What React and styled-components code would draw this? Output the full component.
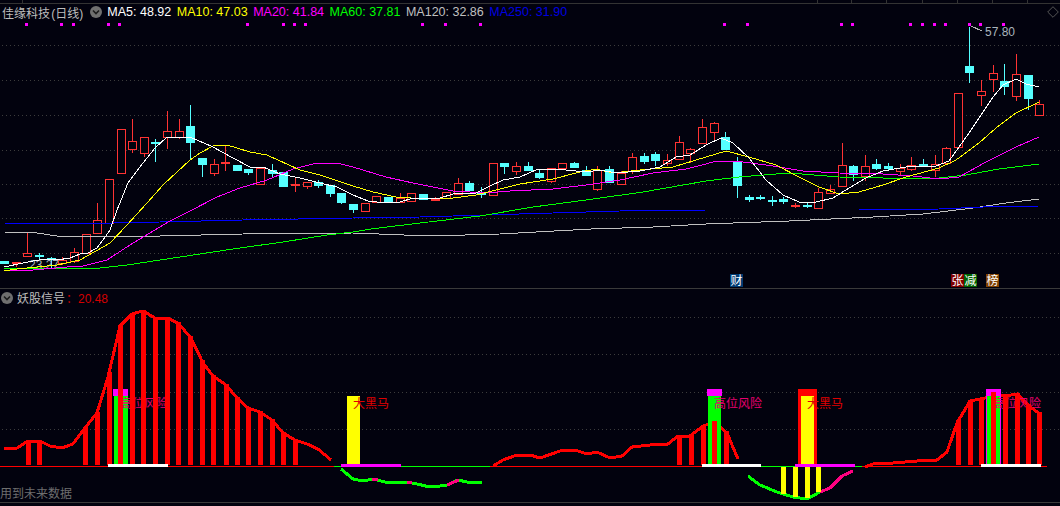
import React from "react";
import styled, { createGlobalStyle } from "styled-components";

const BG = "#02020e";
const CJK = `"Liberation Sans", "Noto Sans CJK SC", sans-serif`;

const GlobalStyle = createGlobalStyle`
  html, body {
    margin: 0;
    padding: 0;
    background: ${BG};
  }
`;

const Page = styled.div`
  width: 1060px;
  height: 506px;
  overflow: hidden;
  display: flex;
  flex-direction: column;
  background: ${BG};
  font-family: ${CJK};
`;

const Ruler = styled.svg`
  display: block;
  flex: none;
  width: 1060px;
  height: 4px;
`;

const Panel = styled.section`
  position: relative;
  flex: none;
`;

const Legend = styled.div`
  display: flex;
  align-items: center;
  height: ${(p) => p.$height}px;
  padding-left: ${(p) => p.$pad}px;
  white-space: nowrap;
`;

const Title = styled.span`
  color: #bdbdbd;
  font-size: 12px;
  word-spacing: -2px;
`;

const MaValue = styled.span`
  color: ${(p) => p.$color};
  font-size: 12.5px;
  margin-right: 5.5px;
`;

const SignalValue = styled.span`
  color: #d40000;
  font-size: 12px;
  margin-left: 1px;
`;

const CollapseBadge = styled.svg`
  flex: none;
  width: 12px;
  height: 12px;
  margin: ${(p) => p.$margin};
`;

const Diamond = styled.svg`
  flex: none;
  width: 12px;
  height: 12px;
  margin-left: auto;
  margin-right: 1px;
`;

const Chart = styled.svg`
  display: block;
  width: 1060px;
  height: ${(p) => p.$height}px;
`;

const Divider = styled.div`
  flex: none;
  height: 1px;
  background: #3a3a3a;
`;

const FutureNote = styled.div`
  position: absolute;
  left: 0;
  bottom: 1px;
  color: #6e6e6e;
  font-size: 12px;
  line-height: 14px;
`;

const GridLine = styled.line`
  stroke: #3c3c3c;
  stroke-width: 1;
  stroke-dasharray: 1 3;
`;

const Crisp = styled.polyline`
  fill: none;
  stroke: ${(p) => p.$color};
  stroke-width: ${(p) => p.$w || 1};
  shape-rendering: crispEdges;
`;

const PriceLabel = styled.text`
  fill: #a9b4bd;
  font-size: 12px;
  font-family: "Liberation Sans", sans-serif;
`;

const SignalLabel = styled.text`
  fill: ${(p) => p.$color};
  font-size: 12px;
  font-family: ${CJK};
`;

const BadgeText = styled.text`
  fill: #fff;
  font-size: 12px;
  font-family: ${CJK};
  text-anchor: middle;
`;

const pts = (arr) => arr.map((p) => p.join(",")).join(" ");

const candleX = (i) => 4.2 + 11.63 * i;

// body top, body bottom, high, low, kind: r hollow red, R solid red, c solid cyan
const CANDLES = [
  [261, 264, 261, 264, "c"], [262, 264, 262, 267, "R"], [252.5, 255.5, 233, 256, "r"], [255, 257, 252.5, 259, "c"],
  [258, 260, 256.5, 268, "c"], [260, 263, 256.5, 265, "r"], [252, 261, 248, 263, "r"], [234, 253, 234, 253, "r"],
  [220, 233, 203, 233, "r"], [179, 223, 179, 223, "r"], [129, 173, 129, 173, "r"], [141, 149, 119, 153, "r"],
  [137, 153, 137, 157, "r"], [142, 144, 139, 162, "c"], [131, 137, 111, 149, "r"], [131, 137, 119, 139, "r"],
  [126, 143, 105, 159, "c"], [158, 165, 158, 177, "c"], [164, 173, 159, 176, "r"], [162, 164, 145, 171, "R"],
  [165, 171, 165, 171, "c"], [169, 173, 169, 175, "c"], [168, 184, 168, 184, "r"], [170, 174, 164, 177, "c"],
  [172, 187, 172, 187, "c"], [184, 185, 178, 192, "R"], [182, 186, 182, 189, "r"], [182, 186, 180, 188, "c"],
  [185, 194, 185, 197, "c"], [193, 203, 193, 204, "c"], [204, 210, 204, 213, "c"], [203, 211, 203, 211, "r"],
  [196, 202, 196, 203, "r"], [197, 202, 197, 203, "c"], [198, 202, 193, 203, "r"], [193, 201, 193, 201, "r"],
  [194, 200, 194, 200, "c"], [198, 201, 197, 201, "R"], [192, 198, 192, 198, "r"], [183, 194, 178, 194, "r"],
  [183, 191, 181, 191, "c"], [193, 195, 187, 198, "c"], [163, 195, 163, 195, "r"], [163, 167, 163, 174, "c"],
  [166, 171, 162, 175, "r"], [166, 171, 162, 171, "c"], [173, 178, 170, 179, "c"], [168, 181, 168, 183, "r"],
  [163, 168, 163, 168, "r"], [163, 168, 162, 168, "c"], [170, 176, 166, 176, "c"], [170, 189, 166, 191, "r"],
  [169, 183, 166, 183, "c"], [173, 184, 171, 184, "r"], [157, 171, 153, 174, "r"], [156, 162, 153, 164, "c"],
  [154, 161, 152, 166, "c"], [160, 163, 154, 166, "r"], [142, 159, 136, 159, "r"], [149, 153, 148, 163, "r"],
  [127, 143, 119, 143, "r"], [123, 132, 122, 140, "r"], [137, 150, 132, 150, "c"], [162, 186, 157, 198, "c"],
  [197, 200, 195, 202, "c"], [197, 199, 195, 200, "c"], [200, 202, 196, 206, "c"], [199, 202, 197, 204, "c"],
  [205, 207, 203, 208, "R"], [205, 207, 202, 208, "c"], [192, 208, 188, 209, "r"], [189, 193, 185, 193, "r"],
  [165, 186, 143, 186, "r"], [166, 175, 165, 181, "c"], [166, 176, 155, 181, "r"], [164, 169, 159, 170, "c"],
  [166, 169, 163, 171, "c"], [168, 171, 164, 176, "r"], [165, 169, 157, 171, "r"], [164, 166, 159, 167, "c"],
  [164, 170, 155, 177, "r"], [148, 163, 147, 163, "r"], [93, 147, 93, 147, "r"], [66, 73, 27, 83, "c"],
  [91, 95, 80, 106, "r"], [73, 79, 65, 92, "r"], [81, 87, 64, 95, "c"], [74, 96, 54, 101, "r"],
  [75, 99, 75, 110, "c"], [104, 115, 100, 115, "r"],
];

const MA5 = [
  [4, 267], [23, 263], [33, 261], [45, 259], [57, 260], [70, 258], [80, 254], [88, 253], [97, 248], [103, 240],
  [110, 230], [117, 210], [128, 183], [143, 163], [155, 148], [167, 137], [190, 137], [213, 147], [233, 158],
  [250, 167], [263, 167], [280, 174], [300, 178], [320, 183], [337, 187], [353, 195], [368, 201], [386, 203],
  [400, 202], [413, 198], [440, 198], [453, 194], [476, 193], [490, 186], [503, 180], [520, 177], [538, 169],
  [566, 170], [586, 172], [600, 170], [616, 173], [640, 171], [660, 167], [676, 157], [690, 155], [706, 145],
  [721, 138], [733, 143], [749, 158], [766, 180], [783, 195], [799, 202], [816, 202], [833, 198], [849, 188],
  [866, 178], [883, 171], [906, 167], [936, 166], [949, 161], [969, 133], [981, 115], [993, 97], [1003, 85],
  [1016, 79], [1026, 84], [1039, 87],
];

const MA10 = [
  [4, 271], [17, 269], [57, 265], [80, 260], [110, 243], [127, 225], [147, 203], [163, 185], [177, 172],
  [190, 160], [200, 153], [213, 146], [227, 145], [250, 152], [267, 155], [300, 170], [320, 175], [353, 186],
  [373, 192], [396, 197], [426, 199], [453, 198], [476, 195], [496, 190], [520, 184], [553, 179], [580, 172],
  [596, 169], [613, 173], [640, 170], [673, 167], [706, 157], [726, 151], [749, 157], [776, 165], [799, 177],
  [819, 187], [839, 194], [859, 192], [883, 185], [906, 177], [939, 168], [956, 160], [979, 143], [996, 128],
  [1016, 113], [1039, 102],
];

const MA20 = [
  [4, 271], [33, 270], [67, 267], [83, 266], [107, 260], [133, 243], [150, 233], [170, 221], [190, 211],
  [217, 197], [240, 188], [267, 180], [293, 169], [317, 163], [337, 163], [353, 167], [386, 177], [413, 183],
  [453, 191], [486, 193], [510, 191], [553, 189], [586, 185], [620, 180], [653, 173], [686, 169], [706, 164],
  [716, 161], [743, 162], [773, 166], [803, 171], [839, 173], [883, 174], [913, 176], [939, 179], [959, 177],
  [986, 162], [1016, 147], [1039, 137],
];

const MA60 = [
  [4, 268], [100, 268], [127, 265], [180, 257], [233, 249], [283, 242], [327, 235], [353, 232], [371, 229],
  [420, 223], [480, 216], [533, 207], [586, 200], [643, 192], [706, 181], [739, 177], [789, 173], [839, 177],
  [883, 178], [939, 178], [966, 175], [999, 169], [1039, 164],
];

const MA120 = [
  [4, 232], [37, 233], [57, 236], [160, 236], [243, 234], [353, 233], [430, 236], [500, 234], [591, 229],
  [653, 227], [706, 224], [789, 221], [873, 217], [923, 214], [973, 208], [1006, 203], [1039, 199],
];

const MA250 = [
  [4, 223], [67, 224], [160, 222], [243, 220], [353, 218], [420, 217], [486, 215], [553, 213], [620, 211],
  [706, 210], [859, 210], [939, 209], [983, 207], [1039, 206],
];

const LEGEND = [
  ["MA5: 48.92", "#ffffff"],
  ["MA10: 47.03", "#ffff00"],
  ["MA20: 41.84", "#ff00ff"],
  ["MA60: 37.81", "#00ff00"],
  ["MA120: 32.86", "#c0c0c0"],
  ["MA250: 31.90", "#0000e0"],
];

const PRICE_GRID = [45, 80, 115, 150, 184, 218, 253];
const SIGNAL_GRID = [317, 354, 392, 429];
const FLAGS = [
  26, 61, 73, 108, 119, 247, 283, 294, 305, 422, 445, 480, 724, 747, 841, 852, 910, 922, 934, 945, 969, 980, 1003,
];
const TICKS = [22, 817, 851, 886, 922, 957, 992, 1027];

const BADGES = [
  ["财", 730, "#003b73"],
  ["张", 951, "#800000"],
  ["减", 964, "#006400"],
  ["榜", 986, "#804000"],
];

const LINE_A = [
  [4, 449], [17, 448], [28, 441], [40, 441], [50, 446], [62, 448], [73, 444], [85, 428], [97, 413], [108, 377],
  [120, 326], [132, 314], [143, 311], [155, 318], [167, 318], [178, 323], [191, 338], [203, 363], [213, 376],
  [226, 385], [237, 398], [248, 408], [260, 412], [272, 420], [283, 433], [295, 440], [307, 444], [318, 449],
  [331, 460],
];

const LINE_B = [
  [493, 466], [503, 460], [517, 455], [530, 455], [540, 458], [563, 450], [575, 450], [587, 454], [597, 452],
  [610, 458], [622, 456], [632, 447], [650, 445], [668, 444], [678, 436], [690, 436], [703, 426], [715, 422],
  [727, 433], [738, 459],
];

const LINE_C = [
  [865, 467], [873, 464], [893, 463], [917, 461], [937, 460], [947, 452], [957, 423], [970, 401], [985, 398],
  [993, 393], [1005, 396], [1017, 394], [1028, 405], [1041, 415],
];

const GREEN_A = [
  [341, 469], [353, 479], [363, 481], [373, 479], [385, 482], [397, 483], [407, 482], [417, 484], [430, 487],
  [440, 486], [447, 485], [458, 480], [467, 482], [482, 483],
];
const PINK_A = [
  [[372, 479], [378, 480]],
  [[407, 482], [412, 483]],
  [[447, 485], [459, 480]],
];
const GREEN_B = [[748, 476], [760, 485], [777, 492], [793, 497], [807, 499], [820, 492]];
const PINK_B = [[820, 492], [830, 488], [842, 476], [853, 471]];

const lineY = (line, x) => {
  for (let i = 0; i < line.length - 1; i++) {
    const [x0, y0] = line[i];
    const [x1, y1] = line[i + 1];
    if (x >= x0 && x <= x1) return y0 + ((y1 - y0) * (x - x0)) / (x1 - x0);
  }
  return 466;
};

const BARS_A = [28, 39.5, 85, 97, 109, 120, 132, 143, 155, 167, 178, 190, 202, 213, 226, 237, 248, 260, 272, 283, 295];
const BARS_B = [679, 691, 703, 714.5, 726];
const BARS_C = [958, 970, 981, 993, 1005, 1017, 1028, 1039];
const DROPS = [[783, 494], [795, 497], [807, 498], [818, 492]];

function Collapse({ margin }) {
  return (
    <CollapseBadge viewBox="0 0 12 12" $margin={margin}>
      <circle cx="6" cy="6" r="6" fill="#6f6f6f" />
      <path d="M3 4.5 L6 7.5 L9 4.5" fill="none" stroke="#1c1c1c" strokeWidth="1.6" />
    </CollapseBadge>
  );
}

function Flat({ x, y, w, h, color }) {
  return <rect x={x} y={y} width={w} height={h} fill={color} shapeRendering="crispEdges" />;
}

function Candle({ i, data }) {
  const [top, bot, hi, lo, kind] = data;
  const cx = Math.round(candleX(i));
  const color = kind === "c" ? "#55ffff" : "#ff3333";
  const y0 = Math.round(top);
  const h = Math.max(2, Math.round(bot) - y0);
  return (
    <g>
      <Flat x={cx} y={Math.round(hi)} w={1} h={Math.round(lo) - Math.round(hi)} color={color} />
      <Flat x={cx - 4} y={y0} w={9} h={kind === "r" ? h + 1 : h} color={color} />
      {kind === "r" && <Flat x={cx - 3} y={y0 + 1} w={7} h={h - 1} color={BG} />}
    </g>
  );
}

function Bar({ x, top, width = 5, bottom = 465, color = "#ff0000" }) {
  return <Flat x={Math.round(x - width / 2)} y={Math.round(top)} w={width} h={Math.round(bottom - top)} color={color} />;
}

function PriceChart() {
  return (
    <Chart viewBox="0 20 1060 268" $height={268}>
      {PRICE_GRID.map((y) => (
        <GridLine key={y} x1="2" x2="1060" y1={y + 0.5} y2={y + 0.5} />
      ))}
      {FLAGS.map((x) => (
        <Flat key={x} x={x - 1} y={23} w={3} h={3} color="#ff00ff" />
      ))}
      {CANDLES.map((c, i) => (
        <Candle key={i} i={i} data={c} />
      ))}
      <PriceLabel x="29" y="269">23.27</PriceLabel>
      <Crisp points={pts(MA120)} $color="#c0c0c0" />
      <Crisp points={pts(MA250)} $color="#0000ff" />
      <Crisp points={pts(MA60)} $color="#00ff00" />
      <Crisp points={pts(MA20)} $color="#ff00ff" />
      <Crisp points={pts(MA10)} $color="#ffff00" />
      <Crisp points={pts(MA5)} $color="#ffffff" />
      <Crisp points="971,26 982,31" $color="#b0b0b0" />
      <PriceLabel x="985" y="36">57.80</PriceLabel>
      {BADGES.map(([ch, x, bg]) => (
        <g key={ch}>
          <Flat x={x} y={274} w={13} h={13} color={bg} />
          <BadgeText x={x + 6.5} y={285}>{ch}</BadgeText>
        </g>
      ))}
    </Chart>
  );
}

function SignalChart() {
  return (
    <Chart viewBox="0 306 1060 196" $height={196}>
      {SIGNAL_GRID.map((y) => (
        <GridLine key={y} x1="2" x2="1060" y1={y + 0.5} y2={y + 0.5} />
      ))}

      <Flat x={0} y={466} w={334} h={1} color="#ff0000" />
      <Flat x={334} y={466} w={156} h={1} color="#00ff00" />
      <Flat x={490} y={466} w={212} h={1} color="#ff0000" />
      <Flat x={761} y={466} w={34} h={1} color="#00ff00" />
      <Flat x={855} y={466} w={7} h={1} color="#00ff00" />
      <Flat x={862} y={466} w={185} h={1} color="#ff0000" />

      <Crisp points={pts(LINE_A)} $color="#ff0000" $w={3} />
      <Crisp points={pts(LINE_B)} $color="#ff0000" $w={3} />
      <Crisp points={pts(LINE_C)} $color="#ff0000" $w={3} />
      <Crisp points={pts(GREEN_A)} $color="#00ff00" $w={3} />
      {PINK_A.map((seg, i) => (
        <Crisp key={i} points={pts(seg)} $color="#ff0080" $w={3} />
      ))}
      <Crisp points={pts(GREEN_B)} $color="#00ff00" $w={3} />
      <Crisp points={pts(PINK_B)} $color="#ff0080" $w={3} />

      <Flat x={113} y={389} w={15} h={7} color="#ff00ff" />
      <Flat x={114} y={396} w={14} h={69} color="#00ff00" />
      <Flat x={707} y={389} w={15} h={7} color="#ff00ff" />
      <Flat x={708} y={396} w={13} h={69} color="#00ff00" />
      <Flat x={986} y={389} w={15} h={76} color="#ff00ff" />
      <Flat x={987} y={396} w={13} h={69} color="#00ff00" />

      <Flat x={347} y={396} w={13} h={69} color="#ffff00" />
      <Flat x={798} y={389} w={19} h={76} color="#ff0000" />
      <Flat x={801} y={396} w={13} h={69} color="#ffff00" />

      <SignalLabel x="120" y="408" $color="#e8006e">高位风险</SignalLabel>
      <SignalLabel x="714" y="408" $color="#e8006e">高位风险</SignalLabel>
      <SignalLabel x="993" y="408" $color="#e8006e">高位风险</SignalLabel>
      <SignalLabel x="353" y="408" $color="#e00000">大黑马</SignalLabel>
      <SignalLabel x="807" y="408" $color="#e00000">大黑马</SignalLabel>

      {BARS_A.map((x) => (
        <Bar key={x} x={x} top={lineY(LINE_A, x) - 1} />
      ))}
      {BARS_B.map((x) => (
        <Bar key={x} x={x} top={lineY(LINE_B, x) - 1} />
      ))}
      {BARS_C.map((x) => (
        <Bar key={x} x={x} top={lineY(LINE_C, x) - 1} />
      ))}
      {DROPS.map(([x, bottom]) => (
        <Bar key={x} x={x} top={467} bottom={bottom} color="#ffff00" />
      ))}

      <Flat x={108} y={464} w={60} h={3} color="#ffffff" />
      <Flat x={702} y={464} w={59} h={3} color="#ffffff" />
      <Flat x={981} y={464} w={60} h={3} color="#ffffff" />
      <Flat x={341} y={464} w={60} h={3} color="#ff00ff" />
      <Flat x={795} y={464} w={60} h={3} color="#ff00ff" />
    </Chart>
  );
}

export default function App() {
  return (
    <Page>
      <GlobalStyle />
      <Ruler viewBox="0 0 1060 4">
        <Flat x={0} y={3} w={1060} h={1} color="#333333" />
        {TICKS.map((x) => (
          <Flat key={x} x={x} y={0} w={1} h={3} color="#333333" />
        ))}
      </Ruler>

      <Panel>
        <Legend $height={16} $pad={2}>
          <Title>佳缘科技 (日线)</Title>
          <Collapse margin="0 5px 0 7px" />
          {LEGEND.map(([text, color]) => (
            <MaValue key={text} $color={color}>{text}</MaValue>
          ))}
          <Diamond viewBox="0 0 12 12">
            <path d="M6 0.7 L11.3 6 L6 11.3 L0.7 6 Z" fill="none" stroke="#555555" />
          </Diamond>
        </Legend>
        <PriceChart />
      </Panel>

      <Divider />

      <Panel>
        <Legend $height={17} $pad={1}>
          <Collapse margin="0 4px 0 0" />
          <Title>妖股信号</Title>
          <SignalValue>：20.48</SignalValue>
        </Legend>
        <SignalChart />
        <FutureNote>用到未来数据</FutureNote>
      </Panel>

      <Divider />
    </Page>
  );
}
